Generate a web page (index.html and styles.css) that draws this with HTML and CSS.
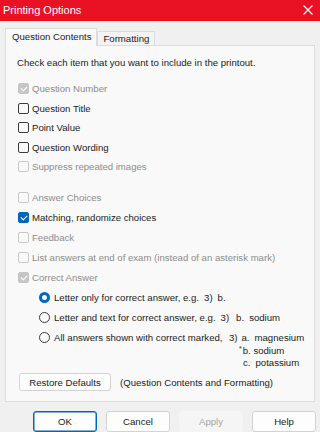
FILE: index.html
```html
<!DOCTYPE html>
<html lang="en">
<head>
    <meta charset="UTF-8">
    <title>Printing Options</title>
    <link rel="stylesheet" href="styles.css">
</head>
<body>
    <div class="titlebar">
        <span>Printing Options</span>
        <svg class="close" width="10" height="10" viewBox="0 0 10 10">
            <path d="M0.5 0.5 L9.5 9.5 M9.5 0.5 L0.5 9.5" stroke="#fff" stroke-width="1.1"/>
        </svg>
    </div>

    <div class="tabs">
        <div class="tab active">Question Contents</div>
        <div class="tab">Formatting</div>
    </div>

    <div class="panel">
        <p class="intro">Check each item that you want to include in the printout.</p>

        <div class="group first">
            <div class="row dis"><span class="box on"></span>Question Number</div>
            <div class="row"><span class="box"></span>Question Title</div>
            <div class="row"><span class="box"></span>Point Value</div>
            <div class="row"><span class="box"></span>Question Wording</div>
            <div class="row dis"><span class="box"></span>Suppress repeated images</div>
        </div>

        <div class="group second">
            <div class="row dis"><span class="box"></span>Answer Choices</div>
            <div class="row"><span class="box on blue"></span>Matching, randomize choices</div>
            <div class="row dis"><span class="box"></span>Feedback</div>
            <div class="row dis"><span class="box"></span>List answers at end of exam (instead of an asterisk mark)</div>
            <div class="row dis"><span class="box on"></span>Correct Answer</div>
            <div class="row radio-row"><span class="radio sel"></span>Letter only for correct answer, e.g.<span class="ex ex1">3)</span><span class="ex">b.</span></div>
            <div class="row radio-row"><span class="radio"></span>Letter and text for correct answer, e.g.<span class="ex ex1">3)</span><span class="ex ex2">b.</span><span class="ex">sodium</span></div>
            <div class="row radio-row tall">
                <span class="radio"></span>
                <span class="all-label">All answers shown with correct marked,</span>
                <div class="sample">
                    <div>3)<span class="gap">a.</span><span class="gap2">magnesium</span></div>
                    <div class="l2"><sup>*</sup>b. sodium</div>
                    <div class="l3">c.<span class="gap2">potassium</span></div>
                </div>
            </div>
        </div>

        <div class="restore">
            <button class="btn">Restore Defaults</button>
            <span>(Question Contents and Formatting)</span>
        </div>
    </div>

    <div class="buttons">
        <button class="btn wide default">OK</button>
        <button class="btn wide">Cancel</button>
        <button class="btn wide disabled">Apply</button>
        <button class="btn wide">Help</button>
    </div>
</body>
</html>
```

FILE: styles.css
```css
* {
    margin: 0;
    padding: 0;
    box-sizing: border-box;
}

html, body {
    width: 320px;
    height: 432px;
    overflow: hidden;
}

body {
    background: #f0f0f0;
    font-family: "Liberation Sans", Arial, sans-serif;
    font-size: 9.6px;
    color: #1b1b1b;
}

.titlebar {
    height: 21px;
    background: #e81224;
    color: #fff;
    font-size: 11px;
    display: flex;
    align-items: center;
    justify-content: space-between;
    padding: 0 7px 1px 3px;
}

.tabs {
    height: 24px;
    display: flex;
    align-items: flex-end;
    padding-left: 5px;
}

.tab {
    height: 14px;
    padding: 0 5px;
    line-height: 13px;
    white-space: nowrap;
    background: #f3f3f3;
    border: 1px solid #dcdcdc;
    border-bottom: none;
}

.tab.active {
    height: 18px;
    line-height: 16px;
    padding: 0 5px 0 6px;
    background: #f9f9f9;
    margin-bottom: -1px;
    position: relative;
    z-index: 1;
}

.panel {
    margin: 0 5px;
    height: 357px;
    background: #f9f9f9;
    border: 1px solid #dcdcdc;
    padding: 10px 0 0 11px;
}

.intro {
    line-height: 14px;
}

.group.first {
    margin-top: 9px;
}

.group.first .row {
    height: 19.5px;
}

.group.second {
    margin-top: 11px;
}

.row {
    height: 20px;
    display: flex;
    align-items: center;
    padding-left: 1px;
    white-space: nowrap;
}

.row.dis {
    color: #8c8c8c;
}

.box {
    width: 11px;
    height: 11px;
    border: 1px solid #3b3b3b;
    border-radius: 2px;
    margin-right: 3px;
    flex: none;
    position: relative;
}

.dis .box {
    border-color: #c8c8c8;
}

.box.on {
    background: #c6c6c6;
    border-color: #c6c6c6;
}

.box.on.blue {
    background: #0067c0;
    border-color: #0067c0;
}

.box.on::after {
    content: "";
    position: absolute;
    left: 3px;
    top: 1px;
    width: 3px;
    height: 5px;
    border-right: 1.2px solid #fff;
    border-bottom: 1.2px solid #fff;
    transform: rotate(45deg);
}

.radio-row {
    padding-left: 22px;
}

.radio {
    width: 11px;
    height: 11px;
    border: 1px solid #3b3b3b;
    border-radius: 50%;
    margin-right: 4px;
    flex: none;
}

.radio.sel {
    border: 3.5px solid #0067c0;
    background: #fff;
}

.ex1 {
    margin-left: 4px;
}

.ex {
    margin-left: 5px;
}

.ex2 {
    margin-left: 7px;
}

.row.tall {
    height: auto;
    align-items: flex-start;
    padding-top: 4px;
}

.all-label {
    width: 175px;
    line-height: 11.5px;
}

.sample {
    line-height: 11.5px;
}

.gap {
    margin-left: 4px;
}

.gap2 {
    margin-left: 5px;
}

.sample .l2 {
    padding-left: 10px;
}

.sample sup {
    font-size: 7px;
    vertical-align: 3px;
    margin-right: 1px;
}

.sample .l3 {
    padding-left: 14px;
}

.restore {
    margin-top: 5px;
    display: flex;
    align-items: center;
    padding-left: 2px;
}

.restore span {
    margin-left: 9px;
}

.btn {
    height: 18px;
    width: 92px;
    font-family: inherit;
    font-size: 9.6px;
    color: #1b1b1b;
    background: #fdfdfd;
    border: 1px solid #d3d3d3;
    border-radius: 3px;
}

.buttons {
    display: flex;
    justify-content: flex-end;
    gap: 9px;
    padding: 9px 4px 0 0;
}

.btn.wide {
    width: 64px;
    height: 21px;
}

.btn.default {
    border: 1px solid #0067c0;
    box-shadow: inset 0 0 0 0.5px #0067c0;
}

.btn.disabled {
    background: #f5f5f5;
    border-color: #f5f5f5;
    color: #a3a3a3;
}
```
